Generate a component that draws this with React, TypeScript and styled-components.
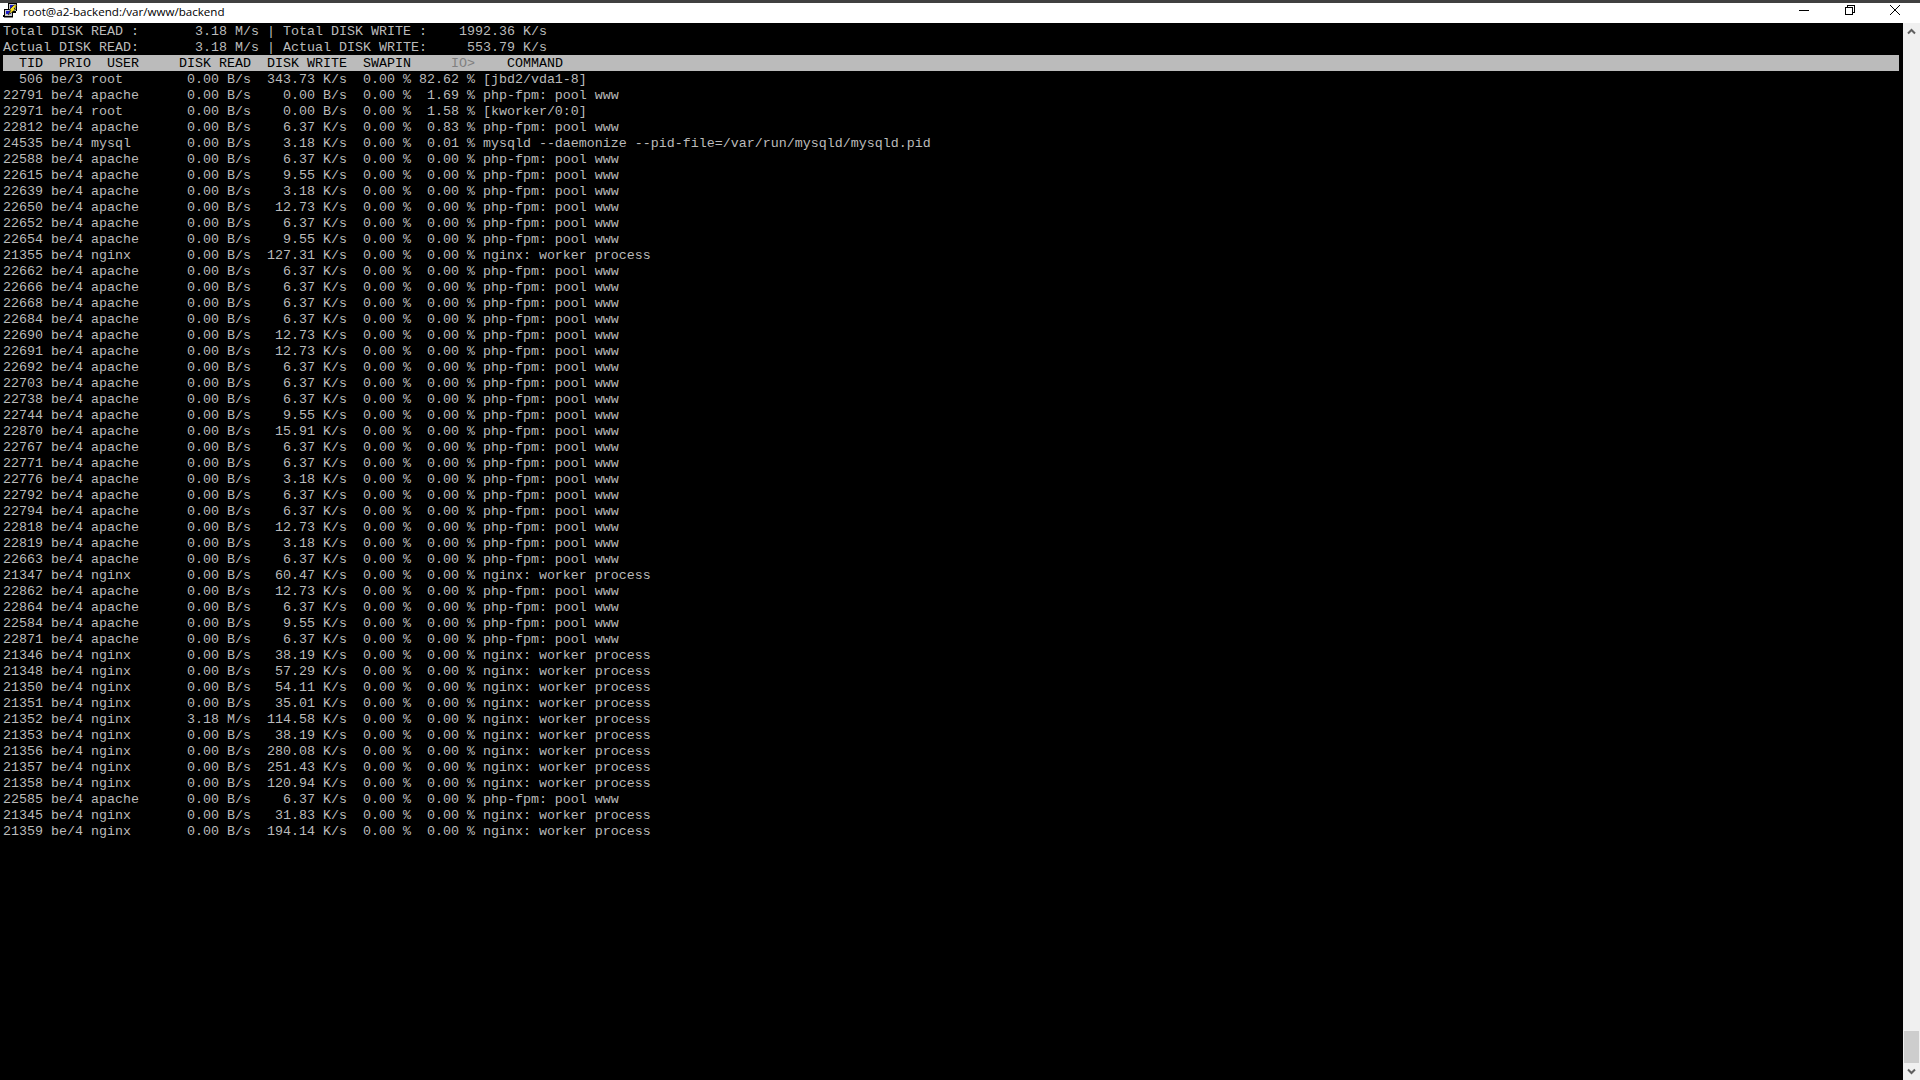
import styled, { createGlobalStyle } from "styled-components";

const GlobalStyle = createGlobalStyle`
    html, body {
        margin: 0;
        padding: 0;
        background: #000000;
        overflow: hidden;
    }
`

const Window = styled.div`
    display: flex;
    flex-direction: column;
    width: 1920px;
    height: 1080px;
    background: #000000;
    border-top: 3px solid #404040;
    box-sizing: border-box;
`

const TitleBar = styled.div`
    display: flex;
    align-items: center;
    flex: none;
    height: 20px;
    padding: 0 2px 0 3px;
    background: #ffffff;
`

const AppIcon = styled.svg`
    flex: none;
    width: 16px;
    height: 16px;
    margin: 0 4px 4px 0;
`

const Title = styled.span`
    flex: 1;
    font-family: "Open Sans", sans-serif;
    font-size: 11.6px;
    line-height: 18px;
    margin-bottom: 2px;
    color: #000000;
`

const WindowButton = styled.div`
    display: flex;
    align-items: center;
    justify-content: center;
    align-self: flex-start;
    width: 45.5px;
    height: 14px;
    & svg {
        display: block;
    }
`

const Main = styled.div`
    display: flex;
    flex: 1;
    min-height: 0;
`

const Terminal = styled.div`
    flex: 1;
    min-width: 0;
    padding: 0 4px 0 3px;
    background: #000000;
`

const Line = styled.div<{ $header?: boolean }>`
    height: 16px;
    font-family: "Liberation Mono", "Courier New", monospace;
    font-size: 13.33px;
    line-height: 18px;
    white-space: pre;
    color: ${p => (p.$header ? "#000000" : "#bbbbbb")};
    background: ${p => (p.$header ? "#bbbbbb" : "transparent")};
`

const Dim = styled.span`
    color: #808080;
`

const Scrollbar = styled.div`
    display: flex;
    flex-direction: column;
    flex: none;
    width: 17px;
    background: #f0f0f0;
`

const ScrollArrow = styled.div`
    display: flex;
    align-items: center;
    justify-content: center;
    flex: none;
    height: 17px;
`

const Track = styled.div`
    display: flex;
    flex-direction: column;
    justify-content: flex-end;
    align-items: center;
    flex: 1;
`

const Thumb = styled.div`
    width: 15px;
    height: 32px;
    background: #cdcdcd;
`

type Proc = [string, string, string, string, string, string];

const PHP = "php-fpm: pool www";
const NGINX = "nginx: worker process";

// tid, user, disk read, disk write, io, command
const procs: Proc[] = [
    ["22791", "apache", "0.00 B/s", "0.00 B/s", "1.69", PHP],
    ["22971", "root", "0.00 B/s", "0.00 B/s", "1.58", "[kworker/0:0]"],
    ["22812", "apache", "0.00 B/s", "6.37 K/s", "0.83", PHP],
    ["24535", "mysql", "0.00 B/s", "3.18 K/s", "0.01", "mysqld --daemonize --pid-file=/var/run/mysqld/mysqld.pid"],
    ["22588", "apache", "0.00 B/s", "6.37 K/s", "0.00", PHP],
    ["22615", "apache", "0.00 B/s", "9.55 K/s", "0.00", PHP],
    ["22639", "apache", "0.00 B/s", "3.18 K/s", "0.00", PHP],
    ["22650", "apache", "0.00 B/s", "12.73 K/s", "0.00", PHP],
    ["22652", "apache", "0.00 B/s", "6.37 K/s", "0.00", PHP],
    ["22654", "apache", "0.00 B/s", "9.55 K/s", "0.00", PHP],
    ["21355", "nginx", "0.00 B/s", "127.31 K/s", "0.00", NGINX],
    ["22662", "apache", "0.00 B/s", "6.37 K/s", "0.00", PHP],
    ["22666", "apache", "0.00 B/s", "6.37 K/s", "0.00", PHP],
    ["22668", "apache", "0.00 B/s", "6.37 K/s", "0.00", PHP],
    ["22684", "apache", "0.00 B/s", "6.37 K/s", "0.00", PHP],
    ["22690", "apache", "0.00 B/s", "12.73 K/s", "0.00", PHP],
    ["22691", "apache", "0.00 B/s", "12.73 K/s", "0.00", PHP],
    ["22692", "apache", "0.00 B/s", "6.37 K/s", "0.00", PHP],
    ["22703", "apache", "0.00 B/s", "6.37 K/s", "0.00", PHP],
    ["22738", "apache", "0.00 B/s", "6.37 K/s", "0.00", PHP],
    ["22744", "apache", "0.00 B/s", "9.55 K/s", "0.00", PHP],
    ["22870", "apache", "0.00 B/s", "15.91 K/s", "0.00", PHP],
    ["22767", "apache", "0.00 B/s", "6.37 K/s", "0.00", PHP],
    ["22771", "apache", "0.00 B/s", "6.37 K/s", "0.00", PHP],
    ["22776", "apache", "0.00 B/s", "3.18 K/s", "0.00", PHP],
    ["22792", "apache", "0.00 B/s", "6.37 K/s", "0.00", PHP],
    ["22794", "apache", "0.00 B/s", "6.37 K/s", "0.00", PHP],
    ["22818", "apache", "0.00 B/s", "12.73 K/s", "0.00", PHP],
    ["22819", "apache", "0.00 B/s", "3.18 K/s", "0.00", PHP],
    ["22663", "apache", "0.00 B/s", "6.37 K/s", "0.00", PHP],
    ["21347", "nginx", "0.00 B/s", "60.47 K/s", "0.00", NGINX],
    ["22862", "apache", "0.00 B/s", "12.73 K/s", "0.00", PHP],
    ["22864", "apache", "0.00 B/s", "6.37 K/s", "0.00", PHP],
    ["22584", "apache", "0.00 B/s", "9.55 K/s", "0.00", PHP],
    ["22871", "apache", "0.00 B/s", "6.37 K/s", "0.00", PHP],
    ["21346", "nginx", "0.00 B/s", "38.19 K/s", "0.00", NGINX],
    ["21348", "nginx", "0.00 B/s", "57.29 K/s", "0.00", NGINX],
    ["21350", "nginx", "0.00 B/s", "54.11 K/s", "0.00", NGINX],
    ["21351", "nginx", "0.00 B/s", "35.01 K/s", "0.00", NGINX],
    ["21352", "nginx", "3.18 M/s", "114.58 K/s", "0.00", NGINX],
    ["21353", "nginx", "0.00 B/s", "38.19 K/s", "0.00", NGINX],
    ["21356", "nginx", "0.00 B/s", "280.08 K/s", "0.00", NGINX],
    ["21357", "nginx", "0.00 B/s", "251.43 K/s", "0.00", NGINX],
    ["21358", "nginx", "0.00 B/s", "120.94 K/s", "0.00", NGINX],
    ["22585", "apache", "0.00 B/s", "6.37 K/s", "0.00", PHP],
    ["21345", "nginx", "0.00 B/s", "31.83 K/s", "0.00", NGINX],
    ["21359", "nginx", "0.00 B/s", "194.14 K/s", "0.00", NGINX],
];

function formatRow([tid, user, read, write, io, cmd]: Proc, prio = "be/4") {
    return (
        tid.padStart(5) + " " + prio + " " + user.padEnd(12) + read.padStart(8) + "  " +
        write.padStart(10) + "  0.00 % " + (io + " %").padStart(7) + " " + cmd
    );
}

function PuttyIcon() {
    return (
        <AppIcon viewBox="0 0 16 16">
            <g shapeRendering="crispEdges">
                <path d="M5 0h9v8h-1v2H5z" fill="#000000" />
                <path d="M6 1h7v7H6z" fill="#c6c6c6" />
                <path d="M7 2h5v4H7z" fill="#1a1ac8" />
                <path d="M1 6h9v8H0v-2h1z" fill="#000000" />
                <path d="M2 7h7v6H2z" fill="#c6c6c6" />
                <path d="M3 8h5v3H3z" fill="#1a1ac8" />
                <path d="M1 14h9v1H1z" fill="#808080" />
            </g>
            <path d="M11 2h3L11 6h2L5 12l3-5H6z" fill="#f8e020" stroke="#000000" strokeWidth="0.5" />
        </AppIcon>
    );
}

function Chevron({ up }: { up?: boolean }) {
    return (
        <svg width="9" height="7" viewBox="0 0 9 7">
            <path d={up ? "M1 5.5 L4.5 2 L8 5.5" : "M1 1.5 L4.5 5 L8 1.5"} fill="none" stroke="#606060" strokeWidth="2" />
        </svg>
    );
}

export default function App() {
    return (
        <Window>
            <GlobalStyle />
            <TitleBar>
                <PuttyIcon />
                <Title>root@a2-backend:/var/www/backend</Title>
                <WindowButton>
                    <svg width="10" height="10" viewBox="0 0 10 10" shapeRendering="crispEdges">
                        <path d="M0 5h10v1H0z" fill="#000000" />
                    </svg>
                </WindowButton>
                <WindowButton>
                    <svg width="10" height="10" viewBox="0 0 10 10" shapeRendering="crispEdges">
                        <path d="M0.5 2.5h7v7h-7zM2.5 2.5v-2h7v7h-2" fill="none" stroke="#000000" />
                    </svg>
                </WindowButton>
                <WindowButton>
                    <svg width="10" height="10" viewBox="0 0 10 10">
                        <path d="M0 0L10 10M10 0L0 10" fill="none" stroke="#000000" strokeWidth="1" />
                    </svg>
                </WindowButton>
            </TitleBar>
            <Main>
                <Terminal>
                    <Line>{"Total DISK READ :       3.18 M/s | Total DISK WRITE :    1992.36 K/s"}</Line>
                    <Line>{"Actual DISK READ:       3.18 M/s | Actual DISK WRITE:     553.79 K/s"}</Line>
                    <Line $header>
                        {"  TID  PRIO  USER     DISK READ  DISK WRITE  SWAPIN     "}
                        <Dim>IO&gt;</Dim>
                        {"    COMMAND"}
                    </Line>
                    <Line>{formatRow(["506", "root", "0.00 B/s", "343.73 K/s", "82.62", "[jbd2/vda1-8]"], "be/3")}</Line>
                    {procs.map(p => (
                        <Line key={p[0]}>{formatRow(p)}</Line>
                    ))}
                </Terminal>
                <Scrollbar>
                    <ScrollArrow>
                        <Chevron up />
                    </ScrollArrow>
                    <Track>
                        <Thumb />
                    </Track>
                    <ScrollArrow>
                        <Chevron />
                    </ScrollArrow>
                </Scrollbar>
            </Main>
        </Window>
    );
}
